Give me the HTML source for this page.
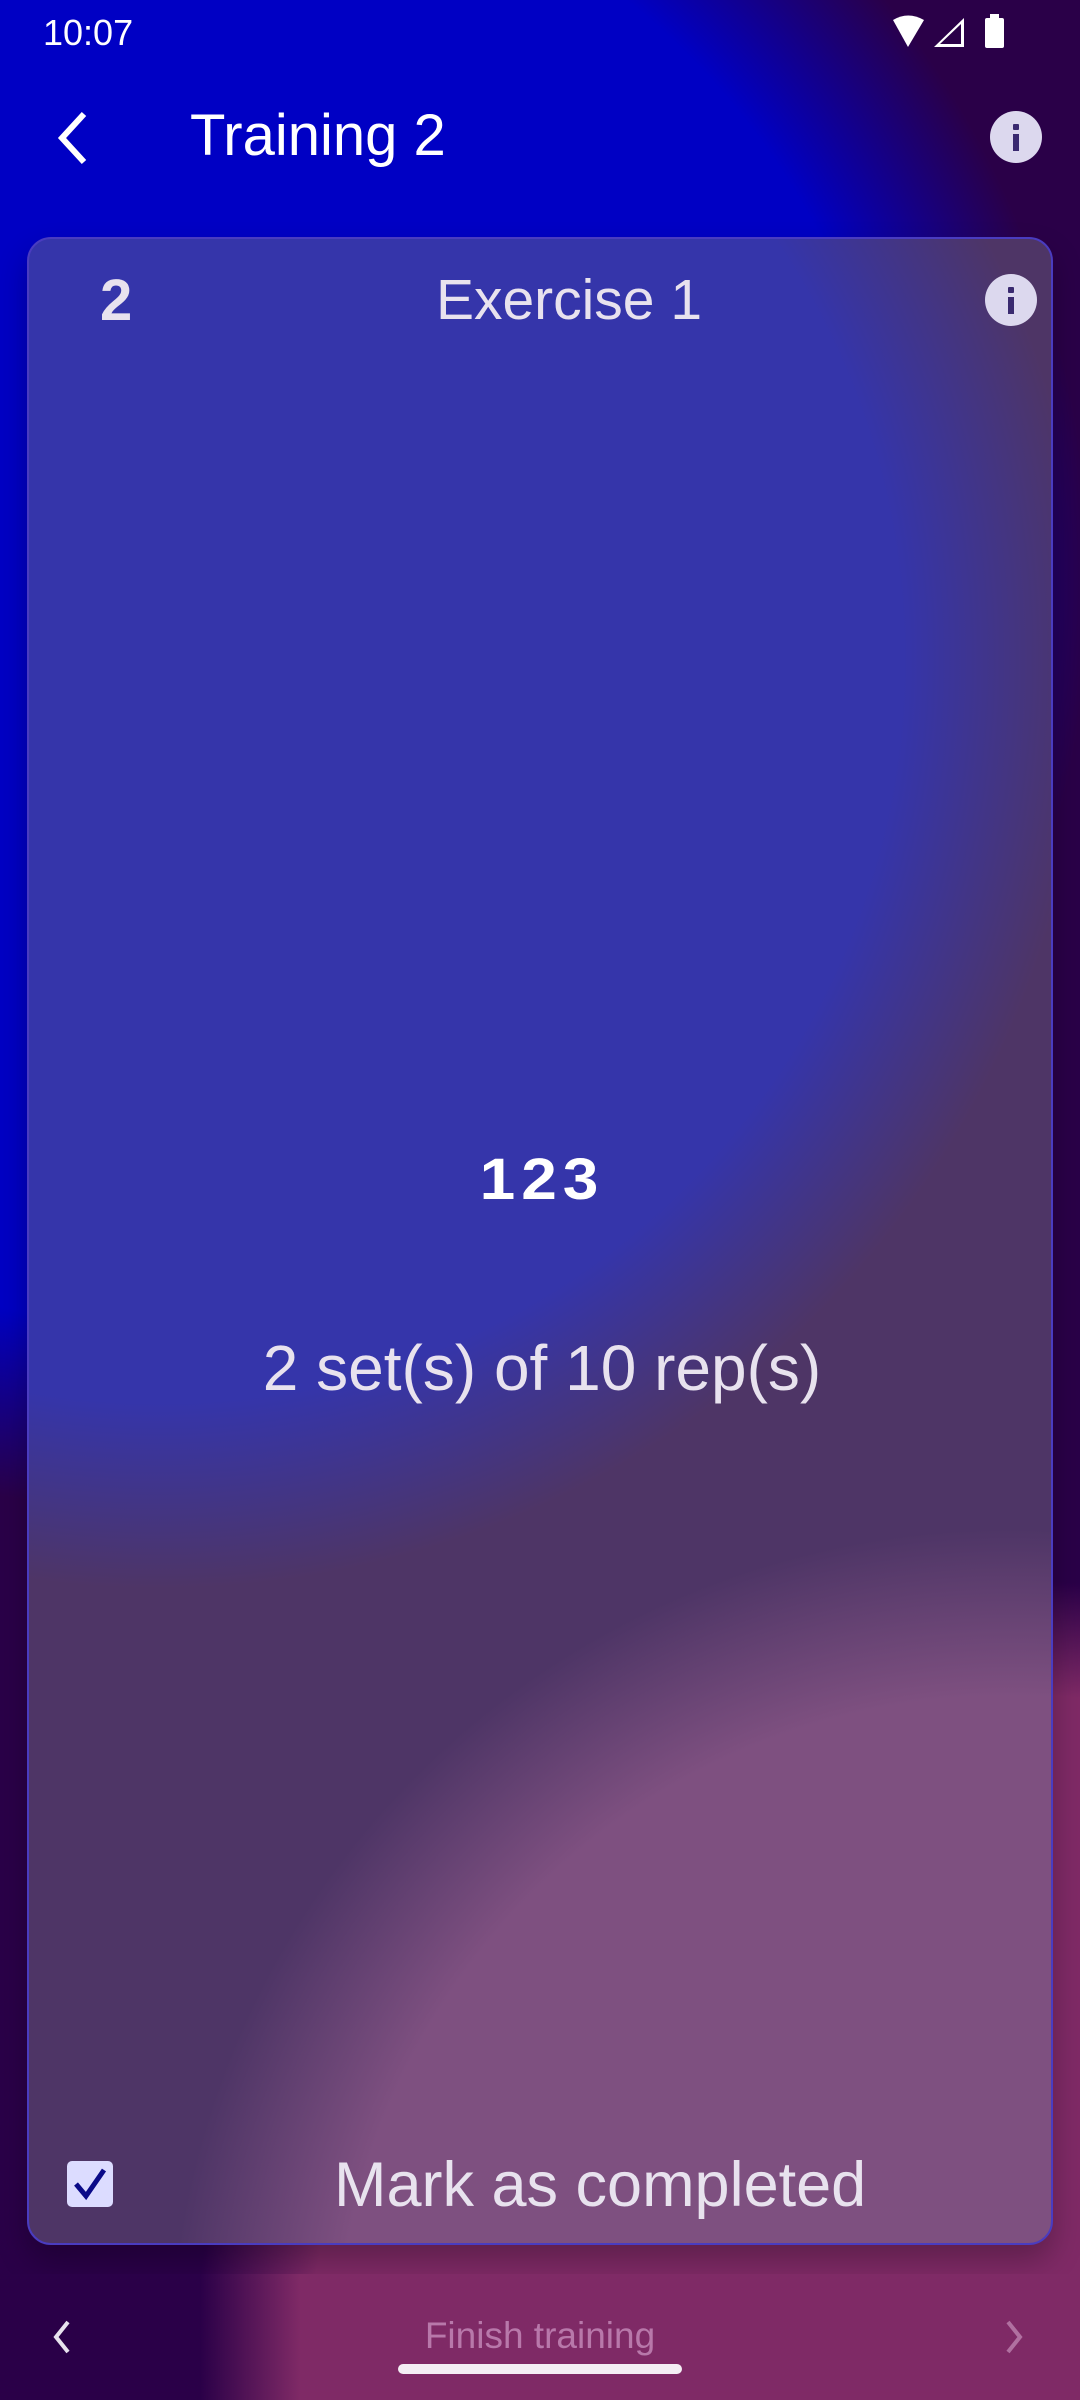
<!DOCTYPE html>
<html><head><meta charset="utf-8">
<style>
*{margin:0;padding:0;box-sizing:border-box}
html,body{width:1080px;height:2400px;overflow:hidden}
body{position:relative;font-family:"Liberation Sans",sans-serif;color:#fff;
background:
radial-gradient(circle 820px at 1010px 2400px,#7f2a66 0,#7f2a66 86%,rgba(127,42,102,0) 100%),
radial-gradient(circle 930px at 160px 580px,#0000c4 0,#0000c4 80%,rgba(0,0,196,0) 100%),
#2a0048;}
.abs{position:absolute}
.card{position:absolute;left:27px;top:237px;width:1026px;height:2008px;border-radius:24px;border:2px solid #4a3cc0;overflow:hidden;
background:
radial-gradient(circle 840px at 980px 2130px,#7e5080 0,#7e5080 80%,rgba(126,80,128,0) 100%),
radial-gradient(circle 930px at 130px 420px,#3535aa 0,#3535aa 80%,rgba(53,53,170,0) 100%),
#4e3566;
box-shadow:0 16px 30px rgba(0,0,0,.25)}
.txt{color:#e8e2ee}
.info{position:absolute;width:52px;height:52px;border-radius:50%;background:#dcd8ee}
.info:before{content:"";position:absolute;left:23px;top:13px;width:6px;height:6px;background:#3a2a70;border-radius:1px}
.info:after{content:"";position:absolute;left:23px;top:23px;width:6px;height:17px;background:#3a2a70}
.bar{position:absolute;left:0;top:2274px;width:1080px;height:126px;
background:linear-gradient(90deg,#2a0048 0,#2a0048 200px,#7f2a66 300px,#7f2a66 100%)}
</style></head><body>
<div class="abs" style="left:43px;top:12px;font-size:36px;">10:07</div>
<svg class="abs" style="left:890px;top:14px" width="130" height="36" viewBox="0 0 130 36">
<path d="M3 6 Q18 -3 34 6 L18 33 Z" fill="#fff"/>
<path d="M44 33 L74 33 L74 4 Z M50 30 L71 30 L71 10 Z" fill="#fff" fill-rule="evenodd"/>
<rect x="95" y="4" width="19" height="30" rx="2" fill="#fff"/><rect x="100" y="0" width="9" height="5" fill="#fff"/>
</svg>
<svg class="abs" style="left:52px;top:110px" width="40" height="56" viewBox="0 0 40 56"><path d="M32 4 L10 28 L32 52" stroke="#fff" stroke-width="6" fill="none"/></svg>
<div class="abs" style="left:190px;top:102px;font-size:58px;">Training 2</div>
<div class="info" style="left:990px;top:111px;"></div>

<div class="card">
<div class="abs txt" style="left:71px;top:28px;font-size:58px;font-weight:bold;">2</div>
<div class="abs txt" style="left:0;width:1080px;text-align:center;top:28px;font-size:57px;">Exercise 1</div>
<div class="info" style="left:956px;top:35px;"></div>
<div class="abs" style="left:0;width:1026px;text-align:center;top:903px;font-size:64px;font-weight:bold;letter-spacing:6px;transform:scaleY(0.92)">123</div>
<div class="abs txt" style="left:0;width:1026px;text-align:center;top:1092px;font-size:64px;">2 set(s) of 10 rep(s)</div>
<svg class="abs" style="left:37px;top:1921px" width="50" height="50" viewBox="0 0 50 50"><rect x="1" y="1" width="46" height="46" rx="5" fill="#dcdcff"/><path d="M10 24 L20 36 L38 10" stroke="#0a0a88" stroke-width="5" fill="none"/></svg>
<div class="abs txt" style="left:305px;top:1910px;font-size:63px;">Mark as completed</div>
</div>

<div class="bar"></div>
<svg class="abs" style="left:50px;top:2318px" width="24" height="38" viewBox="0 0 24 38"><path d="M18 4 L6 19 L18 34" stroke="#e8e2ee" stroke-width="4" fill="none"/></svg>
<svg class="abs" style="left:1002px;top:2318px" width="24" height="38" viewBox="0 0 24 38"><path d="M6 4 L18 19 L6 34" stroke="#b070a0" stroke-width="4" fill="none"/></svg>
<div class="abs" style="left:0;width:1080px;text-align:center;top:2315px;font-size:37px;color:#b878aa;">Finish training</div>
<div class="abs" style="left:398px;top:2364px;width:284px;height:10px;border-radius:5px;background:#f4eef4"></div>
</body></html>
